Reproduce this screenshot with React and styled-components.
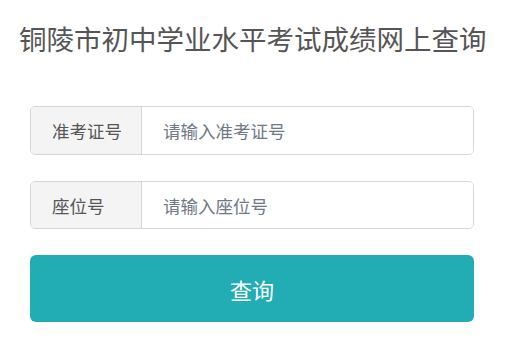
import React from "react";
import styled, { createGlobalStyle } from "styled-components";

const GlobalStyle = createGlobalStyle`
  body {
    margin: 0;
    background: #fff;
    font-family: "Noto Sans CJK SC", "Noto Sans", sans-serif;
  }
`;

const Page = styled.div`
  width: 444px;
  padding: 17px 0 0 30px;
`;

const Title = styled.h1`
  margin: 0 -11px 47px;
  text-align: center;
  font-size: 27.5px;
  font-weight: 400;
  line-height: 42px;
  color: #555;
  white-space: nowrap;
`;

const Form = styled.form`
  display: flex;
  flex-direction: column;
  gap: 26px;
`;

const InputGroup = styled.div`
  display: flex;
  height: ${(p) => p.h}px;
  border: 1px solid #d3d6db;
  border-radius: 5px;
  overflow: hidden;
  box-sizing: border-box;
`;

const Addon = styled.label`
  flex: 0 0 111px;
  display: flex;
  align-items: center;
  padding-left: 21px;
  box-sizing: border-box;
  background: #f4f4f5;
  border-right: 1px solid #d3d6db;
  font-size: 17.5px;
  color: #555;
`;

const Field = styled.input`
  flex: 1;
  border: none;
  outline: none;
  padding: 0 0 0 21px;
  font-family: inherit;
  font-size: 17.5px;
  color: #333;
  background: #fff;
  &::placeholder {
    color: #6f7885;
  }
`;

const Submit = styled.button`
  height: 67px;
  border: none;
  border-radius: 6px;
  background: #22adb4;
  color: #fff;
  font-family: inherit;
  font-size: 22px;
  cursor: pointer;
`;

export default function App() {
  return (
    <>
      <GlobalStyle />
      <Page>
        <Title>铜陵市初中学业水平考试成绩网上查询</Title>
        <Form onSubmit={(e) => e.preventDefault()}>
          <InputGroup h={49}>
            <Addon>准考证号</Addon>
            <Field placeholder="请输入准考证号" />
          </InputGroup>
          <InputGroup h={48}>
            <Addon>座位号</Addon>
            <Field placeholder="请输入座位号" />
          </InputGroup>
          <Submit type="submit">查询</Submit>
        </Form>
      </Page>
    </>
  );
}
